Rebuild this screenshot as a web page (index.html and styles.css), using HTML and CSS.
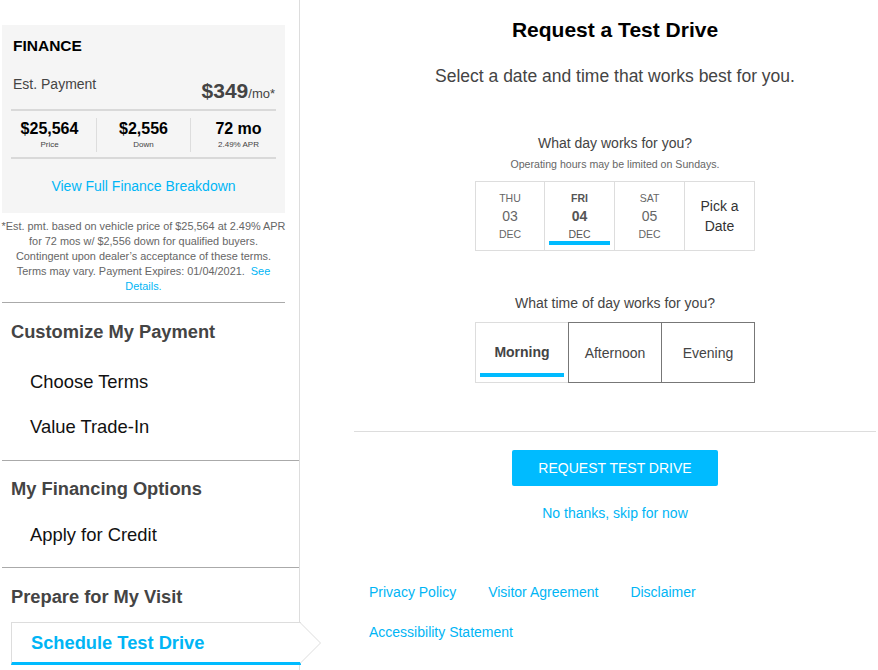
FILE: index.html
```html
<!DOCTYPE html>
<html lang="en">
<head>
  <meta charset="UTF-8">
  <title>Request a Test Drive</title>
  <link rel="stylesheet" href="styles.css">
</head>
<body>
  <div class="page">
    <!-- Left sidebar: finance summary and steps -->
    <aside class="sidebar">
      <div class="finance-box">
        <div class="fin-title">FINANCE</div>
        <div class="fin-est">
          <span class="est-label">Est. Payment</span>
          <span class="est-price">$349<small>/mo*</small></span>
        </div>
        <div class="fin-stats">
          <div class="stat price">
            <div class="stat-value">$25,564</div>
            <div class="stat-label">Price</div>
          </div>
          <div class="stat down">
            <div class="stat-value">$2,556</div>
            <div class="stat-label">Down</div>
          </div>
          <div class="stat term">
            <div class="stat-value">72 mo</div>
            <div class="stat-label">2.49% APR</div>
          </div>
        </div>
        <a class="fin-link" href="#">View Full Finance Breakdown</a>
      </div>

      <p class="disclaimer">*Est. pmt. based on vehicle price of $25,564 at 2.49% APR<br>for 72 mos w/ $2,556 down for qualified buyers.<br>Contingent upon dealer’s acceptance of these terms.<br>Terms may vary. Payment Expires: 01/04/2021. &nbsp;<a href="#">See<br>Details.</a></p>

      <div class="nav-section first">
        <h3 class="nav-heading">Customize My Payment</h3>
        <a class="nav-item" href="#">Choose Terms</a>
        <a class="nav-item" href="#">Value Trade-In</a>
      </div>

      <div class="nav-section mid">
        <h3 class="nav-heading">My Financing Options</h3>
        <a class="nav-item" href="#">Apply for Credit</a>
      </div>

      <div class="nav-section last">
        <h3 class="nav-heading">Prepare for My Visit</h3>
        <a class="nav-active" href="#">
          Schedule Test Drive
          <svg class="nav-arrow" width="22" height="44" viewBox="0 0 22 44">
            <polyline points="0,0.5 20.5,21 0,41.5" fill="#fff" stroke="#dddddd" stroke-width="1"/>
          </svg>
        </a>
      </div>
    </aside>

    <!-- Main content: test drive request -->
    <main class="main">
      <h1 class="title">Request a Test Drive</h1>
      <p class="subtitle">Select a date and time that works best for you.</p>

      <p class="question">What day works for you?</p>
      <p class="note">Operating hours may be limited on Sundays.</p>

      <div class="days">
        <div class="day">
          <span class="dow">THU</span>
          <span class="num">03</span>
          <span class="mon">DEC</span>
        </div>
        <div class="day selected">
          <span class="dow">FRI</span>
          <span class="num">04</span>
          <span class="mon">DEC</span>
          <span class="bar"></span>
        </div>
        <div class="day">
          <span class="dow">SAT</span>
          <span class="num">05</span>
          <span class="mon">DEC</span>
        </div>
        <div class="day pick">Pick a<br>Date</div>
      </div>

      <p class="question time-q">What time of day works for you?</p>

      <div class="times">
        <div class="time selected">
          <span>Morning</span>
          <span class="bar"></span>
        </div>
        <div class="time">Afternoon</div>
        <div class="time">Evening</div>
      </div>

      <hr class="divider">

      <button class="request-btn">REQUEST TEST DRIVE</button>
      <a class="skip" href="#">No thanks, skip for now</a>

      <nav class="footer-links">
        <a href="#">Privacy Policy</a>
        <a href="#">Visitor Agreement</a>
        <a href="#">Disclaimer</a>
        <a href="#">Accessibility Statement</a>
      </nav>
    </main>
  </div>
</body>
</html>
```

FILE: styles.css
```css
/* Page base */
body {
  margin: 0;
  background: #fff;
  font-family: "Liberation Sans", Arial, sans-serif;
  color: #444;
}

a {
  color: #00b5f5;
  text-decoration: none;
}

.page {
  display: flex;
  width: 878px;
  height: 670px;
  overflow: hidden;
}

/* Sidebar */
.sidebar {
  width: 299px;
  flex: none;
  border-right: 1px solid #dddddd;
  padding-top: 25px;
}

.finance-box {
  margin-left: 2px;
  width: 283px;
  box-sizing: border-box;
  background: #f5f5f5;
  padding: 12px 9px 19px;
}

.fin-title {
  font-size: 15.5px;
  line-height: 18px;
  font-weight: bold;
  color: #000;
  padding: 0 2px;
}

.fin-est {
  display: flex;
  justify-content: space-between;
  align-items: flex-start;
  height: 56px;
  box-sizing: border-box;
  padding: 21px 1px 0 2px;
  border-bottom: 2px solid #d9d9d9;
}

.est-label {
  font-size: 14px;
  line-height: 16px;
}

.est-price {
  margin-top: 3px;
  font-size: 21px;
  line-height: 24px;
  font-weight: bold;
}

.est-price small {
  font-size: 13px;
  font-weight: normal;
}

.fin-stats {
  display: flex;
  height: 48px;
  box-sizing: border-box;
  padding: 7px 0 5px;
  border-bottom: 2px solid #d9d9d9;
}

.stat {
  box-sizing: border-box;
  text-align: center;
  color: #000;
  padding-top: 2px;
}

.stat.price {
  width: 85px;
  padding-right: 8px;
}

.stat.down {
  width: 94px;
}

.stat.term {
  width: 86px;
  padding-left: 10px;
}

.stat + .stat {
  border-left: 1px solid #dddddd;
}

.stat-value {
  font-size: 16px;
  line-height: 18px;
  font-weight: bold;
}

.stat-label {
  margin-top: 2px;
  font-size: 8px;
  line-height: 10px;
  color: #444;
}

.fin-link {
  display: block;
  margin-top: 19px;
  text-align: center;
  font-size: 14px;
  line-height: 16px;
}

.disclaimer {
  width: 285px;
  margin: 6px 0 0 1px;
  font-size: 10.9px;
  line-height: 15px;
  text-align: center;
  color: #666;
  white-space: nowrap;
}

/* Sidebar sections */
.nav-section {
  border-top: 1px solid #aaaaaa;
  padding: 19px 0 11px;
  margin-left: 2px;
}

.nav-section.first {
  margin-top: 8px;
  width: 283px;
}

.nav-section.mid {
  padding: 18px 0 10px;
}

.nav-section.last {
  padding-bottom: 0;
}

.nav-heading {
  margin: 0 0 17px 9px;
  font-size: 18.3px;
  line-height: 20px;
  color: #444;
}

.nav-section.mid .nav-heading {
  margin-bottom: 13px;
}

.nav-section.last .nav-heading {
  margin-bottom: 15px;
}

.nav-item {
  display: block;
  height: 45px;
  line-height: 45px;
  padding-left: 28px;
  font-size: 18.4px;
  color: #111;
}

.nav-active {
  position: relative;
  display: block;
  margin-left: 9px;
  margin-right: -2px;
  height: 43px;
  box-sizing: border-box;
  border: 1px solid #dddddd;
  border-right: none;
  border-bottom: 3px solid #00bbff;
  padding-left: 19px;
  line-height: 39px;
  font-size: 18.3px;
  font-weight: bold;
  color: #00b5f5;
  background: #fff;
}

.nav-arrow {
  position: absolute;
  right: -21px;
  top: -1px;
}

/* Main content */
.main {
  flex: 1;
  padding: 18px 2px 0 54px;
  text-align: center;
}

.main p {
  margin: 0;
}

.title {
  margin: 0;
  font-size: 21px;
  line-height: 24px;
  color: #000;
}

.subtitle {
  margin-top: 24px !important;
  font-size: 17.5px;
  line-height: 20px;
}

.question {
  margin-top: 49px !important;
  font-size: 14px;
  line-height: 16px;
}

.note {
  margin-top: 7px !important;
  font-size: 10.6px;
  line-height: 12px;
  color: #666;
}

.days {
  display: flex;
  justify-content: center;
  margin-top: 11px;
}

.day {
  display: flex;
  flex-direction: column;
  align-items: center;
  width: 70px;
  height: 70px;
  box-sizing: border-box;
  border: 1px solid #dddddd;
  padding: 10px 4px 0;
  color: #666;
}

.day + .day {
  margin-left: -1px;
  width: 71px;
}

.dow,
.mon {
  font-size: 10.5px;
  line-height: 12px;
}

.num {
  margin: 3px 0;
  font-size: 14px;
  line-height: 18px;
}

.day.selected {
  color: #555;
}

.day.selected .dow,
.day.selected .num {
  font-weight: bold;
}

.day .bar {
  align-self: stretch;
  height: 4px;
  margin-top: 1px;
  background: #00bbff;
}

.day.pick {
  justify-content: center;
  padding: 0;
  font-size: 14px;
  line-height: 20px;
  color: #333;
}

.time-q {
  margin-top: 44px !important;
}

.times {
  display: flex;
  justify-content: center;
  margin-top: 11px;
}

.time {
  display: flex;
  align-items: center;
  justify-content: center;
  width: 94px;
  height: 61px;
  box-sizing: border-box;
  border: 1px solid #777;
  font-size: 14px;
  color: #444;
}

.time + .time + .time {
  margin-left: -1px;
}

.time.selected {
  flex-direction: column;
  justify-content: flex-start;
  width: 93px;
  border-color: #dddddd;
  border-right: none;
  padding: 21px 4px 0;
  font-weight: bold;
  line-height: 16px;
}

.time .bar {
  align-self: stretch;
  height: 4px;
  margin-top: 13px;
  background: #00bbff;
}

.divider {
  margin: 48px 0 0;
  border: none;
  border-top: 1px solid #dddddd;
}

.request-btn {
  display: block;
  margin: 18px auto 0;
  width: 206px;
  height: 36px;
  border: none;
  border-radius: 2px;
  background: #00bbff;
  color: #fff;
  font-family: inherit;
  font-size: 14px;
  cursor: pointer;
}

.skip {
  display: block;
  margin-top: 19px;
  font-size: 14px;
  line-height: 16px;
}

.footer-links {
  display: flex;
  flex-wrap: wrap;
  column-gap: 32px;
  row-gap: 24px;
  margin-top: 63px;
  padding: 0 15px;
  text-align: left;
}

.footer-links a {
  font-size: 14px;
  line-height: 16px;
}
```
